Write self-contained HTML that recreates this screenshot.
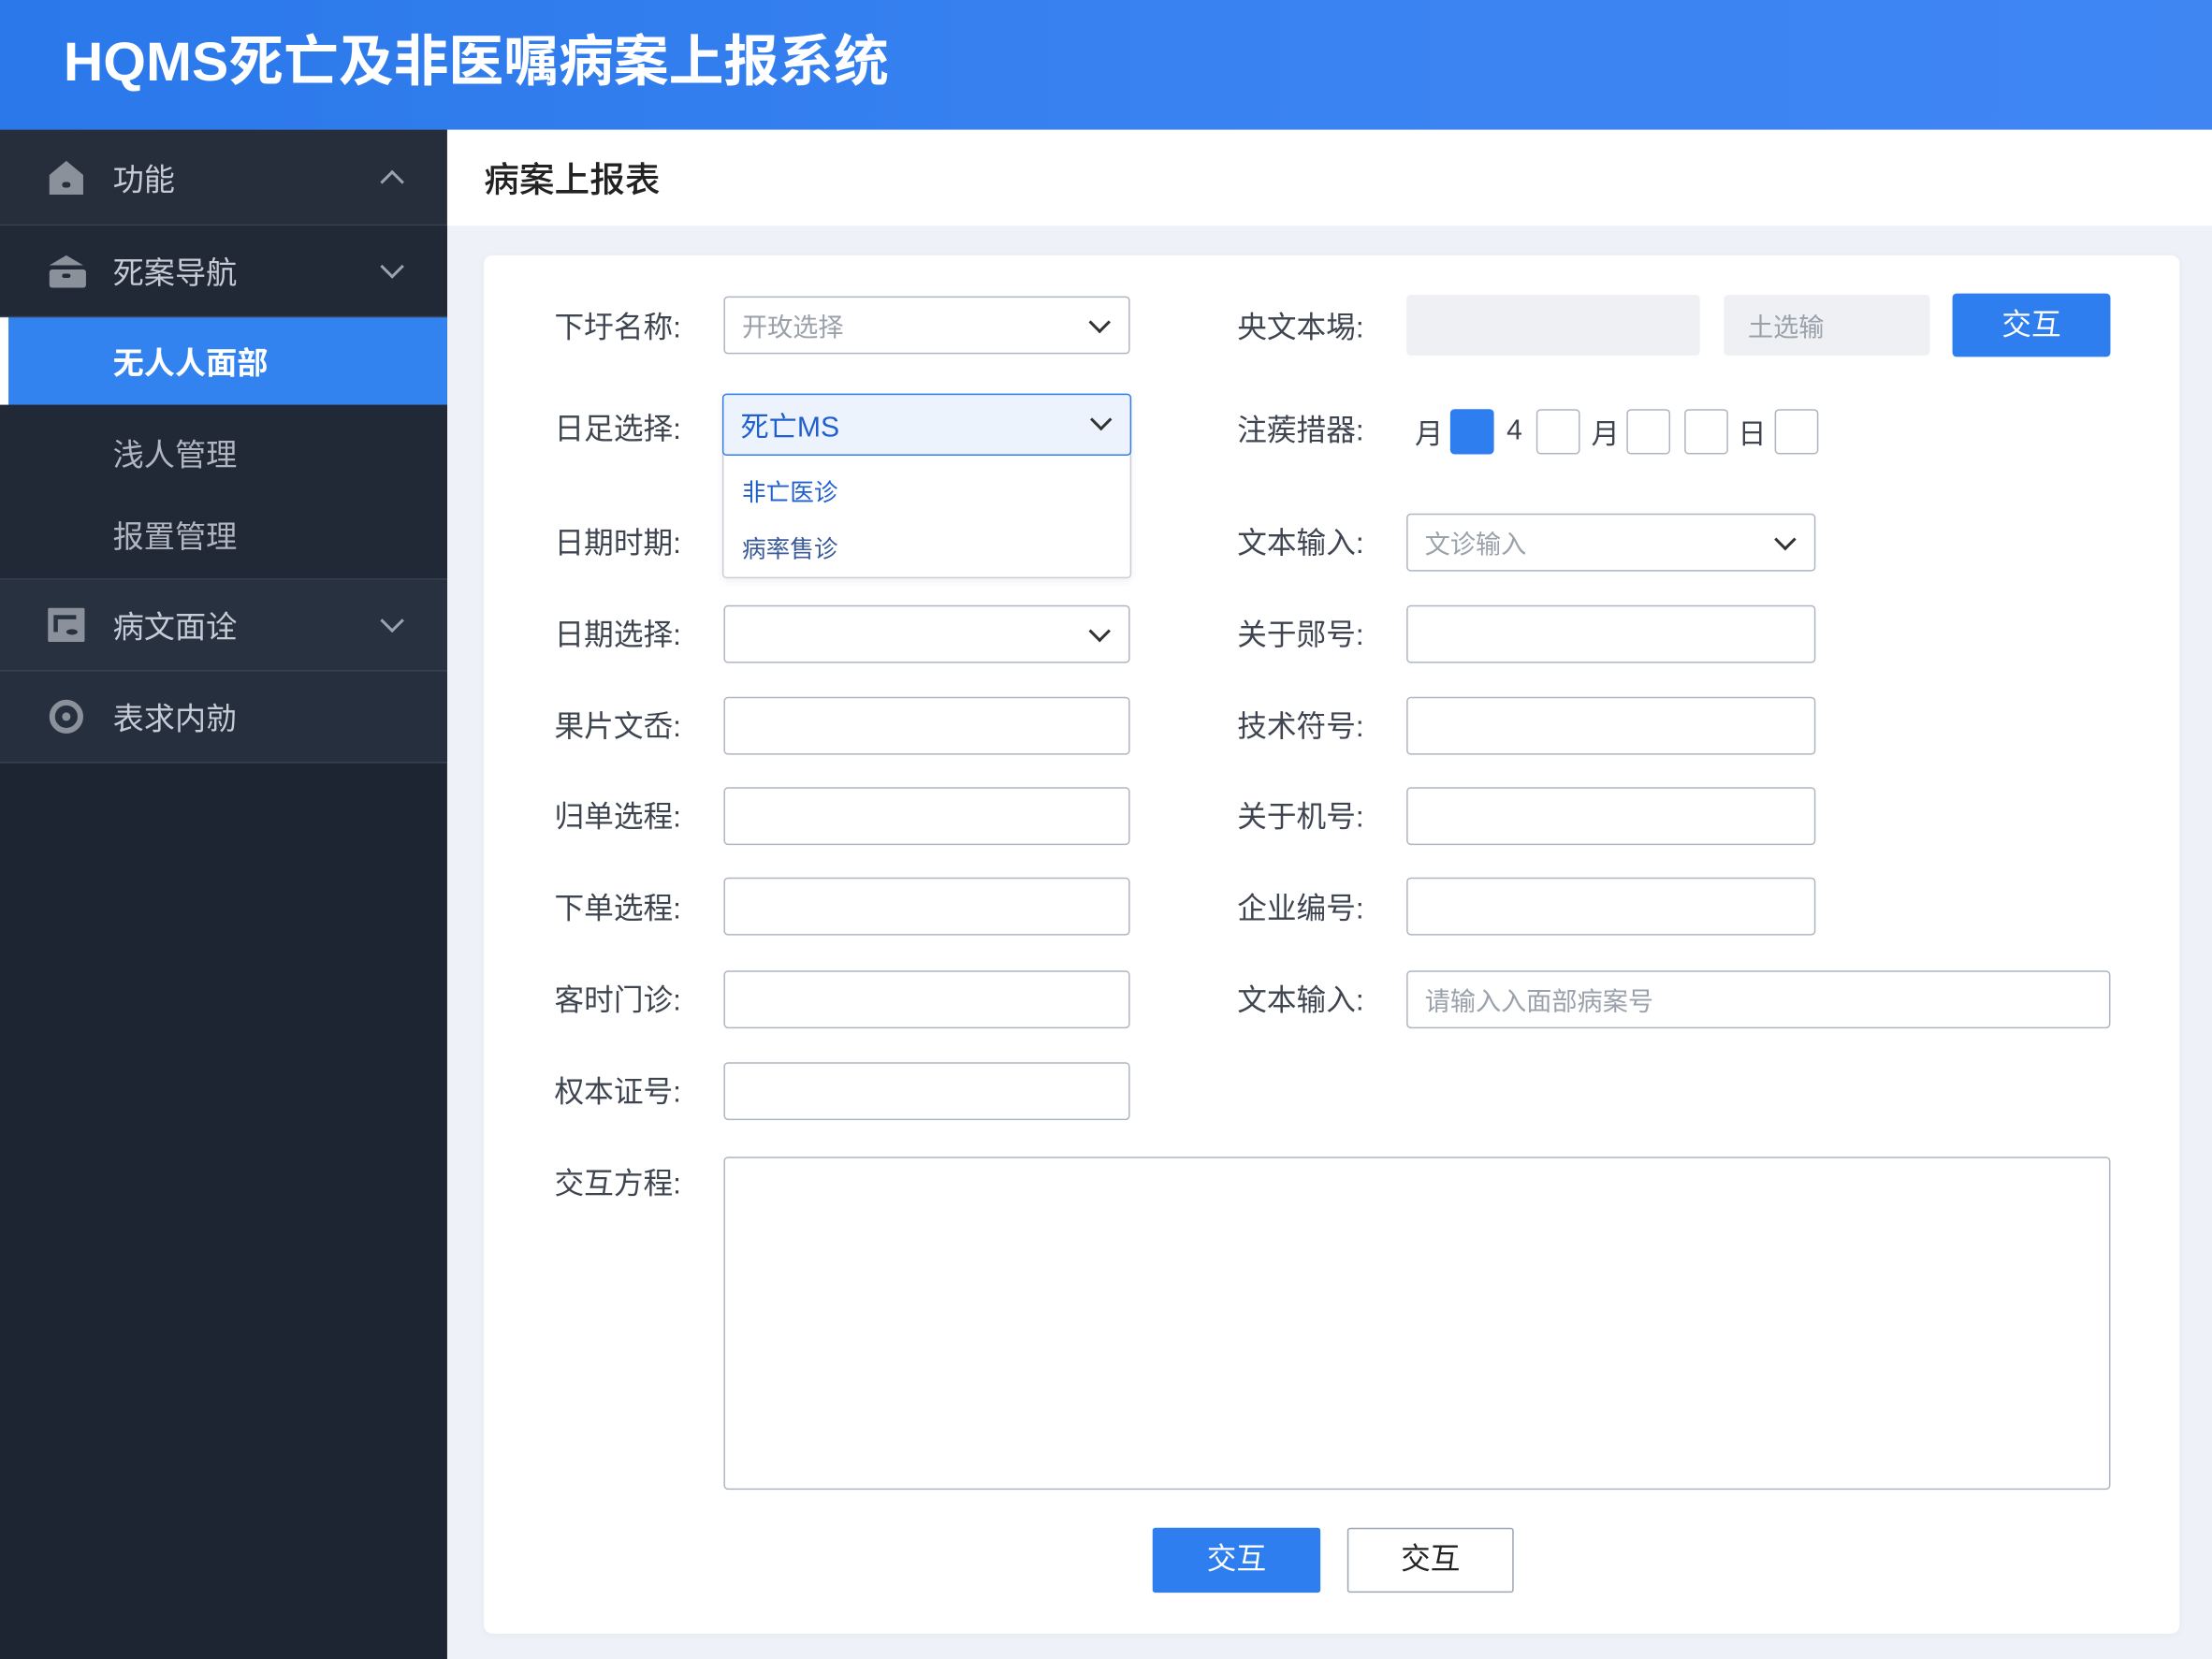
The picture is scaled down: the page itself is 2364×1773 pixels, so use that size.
<!DOCTYPE html>
<html><head><meta charset="utf-8"><style>
*{box-sizing:border-box;margin:0;padding:0}
html,body{width:2364px;height:1773px;overflow:hidden;background:#eef2f8}
#w{position:absolute;left:0;top:0;width:1568px;height:1176px;transform:scale(1.50765);transform-origin:0 0;font-family:"Liberation Sans","Noto Sans CJK SC",sans-serif;background:#eef2f8}
.a{position:absolute}
.hdr{left:0;top:0;width:1568px;height:92px;background:linear-gradient(90deg,#2a78ea,#3a83f2 60%,#3f86f3);color:#fff;font-size:39px;font-weight:bold;padding-left:45px;line-height:90px}
.side{left:0;top:92px;width:317px;height:1084px;background:#1e2532}
.mi{position:absolute;left:0;width:317px;color:#c6ccd6;font-size:22px;border-bottom:1px solid #384252}
.mi span{position:absolute;left:80px;top:50%;transform:translateY(-50%)}
.chev{position:absolute;left:272px;top:50%;width:12px;height:12px;border-right:2px solid #9aa3b0;border-bottom:2px solid #9aa3b0;transform:translateY(-75%) rotate(45deg)}
.chev.up{transform:translateY(-25%) rotate(-135deg)}
.ic{position:absolute;left:33px;top:50%;transform:translateY(-50%)}
.lbl{position:absolute;font-size:21px;color:#3e4550;transform:translateY(-50%)}
.in{position:absolute;background:#fff;border:1px solid #aeb6c2;border-radius:3px;height:41px}
.sel::after{content:"";position:absolute;right:15px;top:12px;width:9px;height:9px;border-right:2px solid #333;border-bottom:2px solid #333;transform:rotate(45deg)}
.ph{position:absolute;left:12px;top:50%;transform:translateY(-50%);font-size:18px;color:#9aa1ab}
.sq{position:absolute;top:290px;width:31px;height:32px;border:1px solid #aeb6c2;border-radius:3px;background:#fff}
.t{position:absolute;font-size:20px;color:#3e4550;top:306px;transform:translateY(-50%)}
</style></head><body><div id="w">
<div class="a hdr">HQMS死亡及非医嘱病案上报系统</div>
<div class="a side">
 <div class="mi" style="top:0;height:68px;background:#262e3b"><svg class="ic" width="28" height="28" viewBox="0 0 28 28"><path d="M2 12 L14 2 L26 12 V26 H2Z" fill="#8b919b"/><rect x="11" y="17" width="6" height="4" rx="2" fill="#262e3b"/></svg><span>功能</span><i class="chev up"></i></div>
 <div class="mi" style="top:68px;height:65px;background:#222936"><svg class="ic" width="28" height="28" viewBox="0 0 28 28"><path d="M2 10 L14 3 L26 10Z" fill="#8b919b"/><rect x="2" y="13" width="26" height="13" rx="2" fill="#8b919b"/><rect x="11" y="16" width="6" height="3" rx="1.5" fill="#222936"/></svg><span>死案导航</span><i class="chev"></i></div>
 <div style="position:absolute;top:133px;left:0;width:317px;height:62px;background:#3282f0;border-left:6px solid #fff"><span style="position:absolute;left:74px;top:50%;transform:translateY(-50%);color:#fff;font-size:22px;font-weight:bold">无人人面部</span></div>
 <div style="position:absolute;top:195px;left:0;width:317px;height:124px;background:#212836;border-bottom:1px solid #384252;color:#b0b6c0;font-size:22px"><span style="position:absolute;left:80px;top:18px">浅人管理</span><span style="position:absolute;left:80px;top:76px">报置管理</span></div>
 <div class="mi" style="top:319px;height:65px;background:#283140"><svg class="ic" width="28" height="26" viewBox="0 0 28 26"><rect x="1" y="1" width="26" height="24" rx="1" fill="#8b919b"/><rect x="5" y="6" width="16" height="3" fill="#283140"/><rect x="5" y="9" width="3" height="9" fill="#283140"/><ellipse cx="18" cy="18" rx="4" ry="2" fill="#283140"/></svg><span>病文面诠</span><i class="chev"></i></div>
 <div class="mi" style="top:384px;height:65px;background:#262f3d"><svg class="ic" width="28" height="28" viewBox="0 0 28 28"><circle cx="14" cy="14" r="10" fill="none" stroke="#8b919b" stroke-width="4"/><circle cx="14" cy="14" r="3" fill="#8b919b"/></svg><span>表求内勍</span></div>
</div>
<div class="a" style="left:317px;top:92px;width:1251px;height:68px;background:#fff"><span style="position:absolute;left:26px;top:50%;transform:translateY(-50%);font-size:25px;color:#222;font-weight:500">病案上报表</span></div>
<div class="a" style="left:343px;top:181px;width:1202px;height:977px;background:#fff;border-radius:6px;box-shadow:0 1px 6px rgba(0,0,0,.04)"></div>

<div class="lbl" style="left:393px;top:231px">下圩名称:</div>
<div class="in sel" style="left:513px;top:210px;width:288px"><span class="ph">开玫选择</span></div>
<div class="lbl" style="left:877px;top:231px">央文本埸:</div>
<div class="in" style="left:997px;top:209px;width:208px;height:43px;background:#eef0f3;border-color:#eef0f3"></div>
<div class="in" style="left:1222px;top:209px;width:146px;height:43px;background:#eef0f3;border-color:#eef0f3"><span class="ph" style="left:16px">土选输</span></div>
<div class="a" style="left:1384px;top:208px;width:112px;height:45px;background:#2f7ef0;border-radius:3px;color:#fff;font-size:21px;text-align:center;line-height:45px">交互</div>

<div class="lbl" style="left:393px;top:303px">日足选择:</div>
<div class="in" style="left:512px;top:279px;width:290px;height:131px;border-color:#c8ced8;box-shadow:0 2px 6px rgba(0,0,0,.06)"></div>
<div class="in sel" style="left:512px;top:279px;width:290px;height:44px;background:#edf3fd;border:1.5px solid #2f7ef0"><span class="ph" style="color:#1f5fcf;font-size:20px">死亡MS</span></div>
<div class="a" style="left:526px;top:335px;font-size:17px;color:#1f5fcf">非亡医诊</div>
<div class="a" style="left:526px;top:375px;font-size:17px;color:#3a5a9a">病率售诊</div>
<div class="lbl" style="left:877px;top:304px">注蒺措器:</div>
<span class="t" style="left:1003px">月</span>
<div class="sq" style="left:1028px;background:#2f7ef0;border-color:#2f7ef0"></div>
<span class="t" style="left:1068px">4</span>
<div class="sq" style="left:1089px"></div>
<span class="t" style="left:1128px">月</span>
<div class="sq" style="left:1153px"></div>
<div class="sq" style="left:1194px"></div>
<span class="t" style="left:1232px">日</span>
<div class="sq" style="left:1258px"></div>

<div class="lbl" style="left:393px;top:384px">日期时期:</div>
<div class="lbl" style="left:877px;top:384px">文本输入:</div>
<div class="in sel" style="left:997px;top:364px;width:290px"><span class="ph">文诊输入</span></div>

<div class="lbl" style="left:393px;top:449px">日期选择:</div>
<div class="in sel" style="left:513px;top:429px;width:288px"></div>
<div class="lbl" style="left:877px;top:449px">关于郧号:</div>
<div class="in" style="left:997px;top:429px;width:290px"></div>

<div class="lbl" style="left:393px;top:514px">果片文岙:</div>
<div class="in" style="left:513px;top:494px;width:288px"></div>
<div class="lbl" style="left:877px;top:514px">技术符号:</div>
<div class="in" style="left:997px;top:494px;width:290px"></div>

<div class="lbl" style="left:393px;top:578px">归单选程:</div>
<div class="in" style="left:513px;top:558px;width:288px"></div>
<div class="lbl" style="left:877px;top:578px">关于机号:</div>
<div class="in" style="left:997px;top:558px;width:290px"></div>

<div class="lbl" style="left:393px;top:643px">下单选程:</div>
<div class="in" style="left:513px;top:622px;width:288px"></div>
<div class="lbl" style="left:877px;top:643px">企业编号:</div>
<div class="in" style="left:997px;top:622px;width:290px"></div>

<div class="lbl" style="left:393px;top:708px">客时门诊:</div>
<div class="in" style="left:513px;top:688px;width:288px"></div>
<div class="lbl" style="left:877px;top:708px">文本输入:</div>
<div class="in" style="left:997px;top:688px;width:499px"><span class="ph">请输入入面部病案号</span></div>

<div class="lbl" style="left:393px;top:773px">权本证号:</div>
<div class="in" style="left:513px;top:753px;width:288px"></div>

<div class="lbl" style="left:393px;top:838px">交互方程:</div>
<div class="in" style="left:513px;top:820px;width:983px;height:236px"></div>

<div class="a" style="left:817px;top:1083px;width:119px;height:46px;background:#2f7ef0;border-radius:2px;color:#fff;font-size:21px;text-align:center;line-height:46px">交互</div>
<div class="a" style="left:955px;top:1083px;width:118px;height:46px;background:#fff;border:1px solid #9ea6b2;border-radius:2px;color:#222;font-size:21px;text-align:center;line-height:44px">交互</div>
</div></body></html>
